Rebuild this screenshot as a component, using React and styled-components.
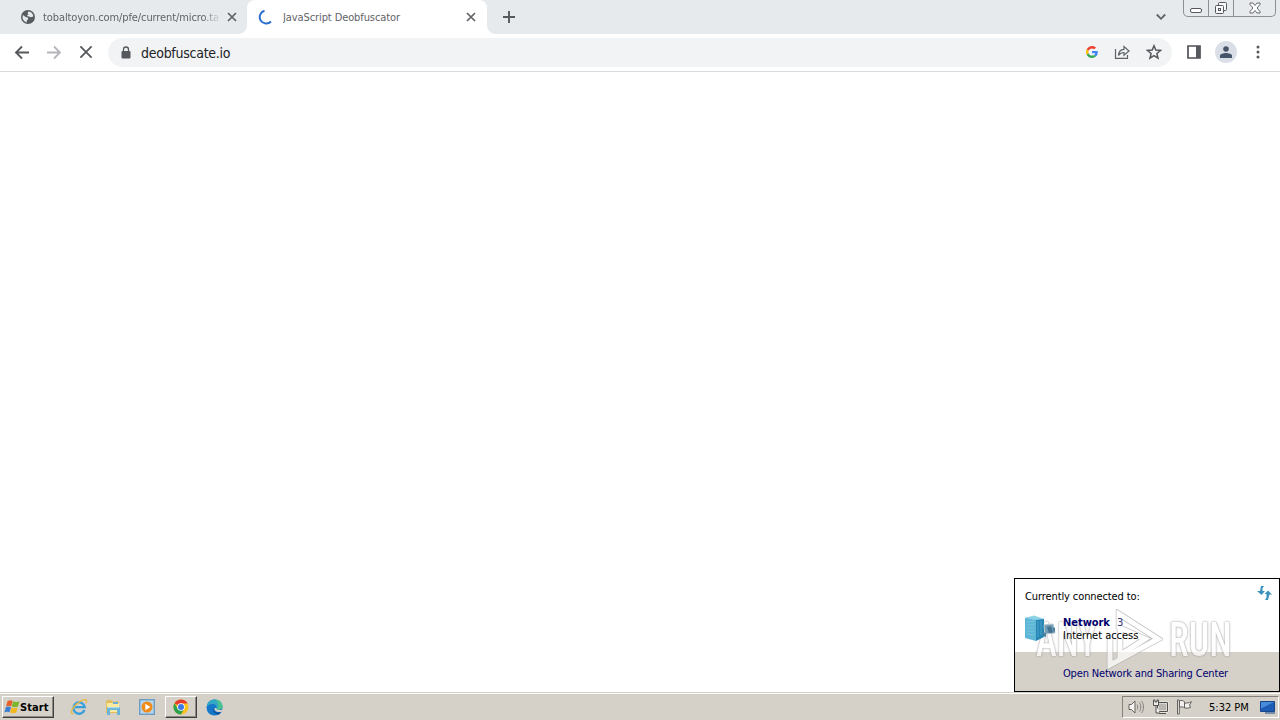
import React from 'react';
import styled, { createGlobalStyle } from 'styled-components';

const GlobalStyle = createGlobalStyle`
	* {
		box-sizing: border-box;
	}
	body {
		margin: 0;
		overflow: hidden;
		font-family: 'DejaVu Sans Condensed', 'DejaVu Sans', sans-serif;
		font-stretch: condensed;
		font-size: 11px;
	}
	svg {
		display: block;
		flex: none;
	}
`;

const Desktop = styled.div`
	width: 1280px;
	height: 720px;
	display: flex;
	flex-direction: column;
	background: #fff;
	position: relative;
`;

const TabStrip = styled.div`
	height: 34px;
	flex: none;
	display: flex;
	background: #e7eaed;
`;

const Tab = styled.div`
	width: ${(p) => (p.$active ? 240 : 247)}px;
	height: 34px;
	display: flex;
	align-items: center;
	padding: 0 ${(p) => (p.$active ? '11px 0 11px' : '10px 0 21px')};
	color: #5f6368;
	background: ${(p) => (p.$active ? '#fff' : 'transparent')};
	border-radius: 8px 8px 0 0;
	position: relative;

	&::before,
	&::after {
		content: '';
		display: ${(p) => (p.$active ? 'block' : 'none')};
		position: absolute;
		bottom: 0;
		width: 8px;
		height: 8px;
	}
	&::before {
		left: -8px;
		background: radial-gradient(circle at 0 0, transparent 7.5px, #fff 8px);
	}
	&::after {
		right: -8px;
		background: radial-gradient(circle at 100% 0, transparent 7.5px, #fff 8px);
	}
`;

const TabTitle = styled.div`
	flex: 1;
	margin-left: ${(p) => p.$gap}px;
	font-size: 11px;
	letter-spacing: ${(p) => p.$spacing}px;
	white-space: nowrap;
	overflow: hidden;
	mask-image: ${(p) => (p.$fade ? 'linear-gradient(to right, #000 160px, transparent 178px)' : 'none')};
`;

const NewTab = styled.div`
	width: 44px;
	display: flex;
	align-items: center;
	justify-content: center;
`;

const StripRight = styled.div`
	margin-left: auto;
	display: flex;
	align-items: flex-start;
`;

const TabSearch = styled.div`
	height: 34px;
	padding-right: 16px;
	display: flex;
	align-items: center;
`;

const WindowButtons = styled.div`
	height: 17px;
	margin-right: 4px;
	display: flex;
	border: 1px solid #8c8f94;
	border-top: 0;
	border-radius: 0 0 5px 5px;
`;

const WindowButton = styled.div`
	width: ${(p) => p.$width}px;
	display: flex;
	align-items: center;
	justify-content: center;

	& + & {
		border-left: 1px solid #8c8f94;
	}
`;

const Toolbar = styled.div`
	height: 38px;
	flex: none;
	display: flex;
	align-items: center;
	border-bottom: 1px solid #d9dbde;
	background: #fff;
`;

const NavButton = styled.div`
	width: 32px;
	display: flex;
	justify-content: center;
`;

const NavButtons = styled.div`
	display: flex;
	padding: 0 6px;
`;

const AddressBar = styled.div`
	width: 1064px;
	height: 29px;
	padding: 0 10px 0 12px;
	display: flex;
	align-items: center;
	background: #f1f3f4;
	border-radius: 15px;
`;

const Url = styled.div`
	flex: 1;
	margin-left: 9px;
	font-size: 14px;
	letter-spacing: -0.27px;
	color: #202124;
`;

const AddressIcons = styled.div`
	display: flex;
	align-items: center;
	gap: 16px;
	padding-bottom: 1px;
`;

const ToolbarIcons = styled.div`
	display: flex;
	align-items: center;
	padding: 0 0 1px 6px;
`;

const Avatar = styled.div`
	width: 22px;
	height: 22px;
	border-radius: 50%;
	background: #dadfe7;
	display: flex;
	align-items: center;
	justify-content: center;
`;

const Page = styled.main`
	flex: 1;
`;

const Taskbar = styled.div`
	height: 28px;
	flex: none;
	display: flex;
	align-items: center;
	padding: 2px 1px 1px 2px;
	background: #d5d0c8;
	border-top: 1px solid #d5d0c8;
	box-shadow: inset 0 1px 0 #fff;
`;

const StartButton = styled.div`
	width: 52px;
	height: 22px;
	display: flex;
	align-items: center;
	padding-left: 1px;
	font-weight: bold;
	letter-spacing: 0.1px;
	border: 1px solid;
	border-color: #fff #404040 #404040 #fff;
	box-shadow: inset -1px -1px 0 #8c8882;
`;

const QuickLaunch = styled.div`
	display: flex;
	align-items: center;
	margin-left: 8px;
`;

const LaunchItem = styled.div`
	width: ${(p) => (p.$active ? 32 : 34)}px;
	height: 22px;
	margin: 0 ${(p) => (p.$active ? 1 : 0)}px;
	display: flex;
	align-items: center;
	justify-content: center;
	border: 1px solid;
	border-color: ${(p) => (p.$active ? '#fff #404040 #404040 #fff' : 'transparent')};
	box-shadow: ${(p) => (p.$active ? 'inset -1px -1px 0 #8c8882' : 'none')};
`;

const Tray = styled.div`
	width: 157px;
	height: 22px;
	margin-left: auto;
	padding-left: 5px;
	display: flex;
	align-items: center;
	gap: 7px;
	border: 1px solid;
	border-color: #85817c #fff #fff #85817c;
`;

const Clock = styled.div`
	width: 44px;
	margin-left: 9px;
	letter-spacing: 0;
	white-space: nowrap;
`;

const Flyout = styled.div`
	position: absolute;
	right: 0;
	bottom: 28px;
	width: 266px;
	height: 114px;
	border: 1px solid #000;
	background: #fff;
	display: flex;
	flex-direction: column;
`;

const FlyoutBody = styled.div`
	position: relative;
	z-index: 1;
	height: 73px;
	padding: 7px 7px 0 10px;
	display: flex;
	flex-direction: column;
`;

const FlyoutHeader = styled.div`
	height: 21px;
	display: flex;
	align-items: center;
	justify-content: space-between;
	line-height: 13px;
	letter-spacing: -0.1px;
`;

const RefreshSlot = styled.div`
	padding-bottom: 7px;
`;

const NetworkRow = styled.div`
	display: flex;
	margin-top: 8px;
	gap: 6px;
`;

const NetworkText = styled.div`
	display: flex;
	flex-direction: column;
	padding-top: 1px;
	line-height: 13px;
	letter-spacing: -0.03px;
`;

const NetworkName = styled.div`
	height: 13px;
	color: #00006c;
	font-weight: bold;
	display: flex;
	gap: 7px;

	span {
		font-weight: normal;
		color: #3a3a80;
	}
`;

const FlyoutFooter = styled.div`
	flex: 1;
	padding: 3px 0 0 48px;
	display: flex;
	align-items: center;
	background: #d5d0c8;
	color: #00006c;
	letter-spacing: -0.17px;
	white-space: nowrap;
`;

const FooterLink = styled.span`
	position: relative;
	z-index: 1;
`;

// sits over the panel backgrounds, under the flyout texts
const Watermark = styled.div`
	position: absolute;
	right: 48px;
	bottom: 20px;
	width: 195px;
	height: 62px;
	display: flex;
	align-items: center;
	justify-content: space-between;
	opacity: 0.7;
`;

const WatermarkWord = styled.div`
	width: 62px;
	font-family: Roboto, sans-serif;
	font-size: 49px;
	font-weight: 500;
	line-height: 62px;
	white-space: nowrap;
	color: #fff;
	text-shadow: 0 0 1px #888, 0 0 2px #999, 0 0 3px #aaa;
	transform: scaleX(${(p) => p.$scale});
	transform-origin: left;
`;

const CloseIcon = ({ size, color = '#5f6368', weight = 1.7 }) => (
	<svg width={size} height={size} viewBox="0 0 10 10" stroke={color} strokeWidth={weight}>
		<path d="M1 1l8 8M9 1l-8 8" />
	</svg>
);

const ArrowIcon = ({ forward }) => (
	<svg width="16" height="16" viewBox="0 0 16 16" fill="none" stroke={forward ? '#b4b6b9' : '#55585d'} strokeWidth="1.8">
		<path d={forward ? 'M1 7.500h13M8 1.500L14 7.500 8 13.500' : 'M15 7.500H2M8 1.500L2 7.500 8 13.500'} />
	</svg>
);

const GlobeIcon = () => (
	<svg width="14" height="14" viewBox="0 0 14 14">
		<circle cx="7" cy="7" r="7" fill="#565b60" />
		<path d="M2 5l3 2.2 2 .3v1.8L5.6 11l.2 1.4C3.3 11.800 1.500 9.700 1.500 7zM7.500 1.500l-1 1.500 1 1.300-1.800 1.600L8 6.500l1.800.8 2.500-.8A5.500 5.500 0 0 0 7.500 1.500z" fill="#e7eaed" />
	</svg>
);

const GoogleIcon = () => (
	<svg width="12" height="12" viewBox="0 0 48 48">
		<path fill="#EA4335" d="M24 9.500c3.540 0 6.710 1.220 9.210 3.600l6.850-6.850C35.900 2.380 30.470 0 24 0 14.620 0 6.510 5.380 2.560 13.220l7.980 6.190C12.430 13.720 17.740 9.500 24 9.500z" />
		<path fill="#4285F4" d="M46.980 24.550c0-1.570-.15-3.090-.38-4.550H24v9.020h12.940c-.58 2.960-2.260 5.480-4.780 7.180l7.730 6c4.510-4.180 7.090-10.360 7.090-17.650z" />
		<path fill="#FBBC05" d="M10.530 28.590c-.48-1.450-.76-2.990-.76-4.590s.27-3.140.76-4.590l-7.980-6.190C.92 16.460 0 20.120 0 24c0 3.880.92 7.540 2.560 10.780l7.970-6.190z" />
		<path fill="#34A853" d="M24 48c6.480 0 11.930-2.130 15.890-5.810l-7.730-6c-2.150 1.450-4.920 2.300-8.160 2.300-6.260 0-11.570-4.220-13.470-9.910l-7.980 6.190C6.510 42.620 14.620 48 24 48z" />
	</svg>
);

const WindowsLogo = () => (
	<svg width="16" height="16" viewBox="0 0 16 16">
		<path d="M3.500 2.200c2-1.200 3.500-1.200 5.200-.2L7.200 7.400c-1.600-1-3.500-1-5.200.1z" fill="#e8602c" />
		<path d="M9.200 2.300c1.800 1 3.900 1 6.300 0L14 7.500c-2.200 1-4.200 1-6.300 0z" fill="#7db72f" />
		<path d="M1.800 8.200c1.800-1 3.500-.9 5.200 0L5.500 13.300c-1.600-.9-3.300-.9-5.100.1z" fill="#3b7fd0" />
		<path d="M7.500 8.400c1.900 1 4 1 6.200 0l-1.400 5.200c-2 1-4.200 1-6.200 0z" fill="#f4b81c" />
	</svg>
);

const IeIcon = () => (
	<svg width="18" height="18" viewBox="0 0 18 18" fill="none">
		<path d="M14.500 12A5.700 5.700 0 1 1 14.800 9.200H5" stroke="#38a0dc" strokeWidth="2.300" />
		<path d="M3.500 15.500C.2 16 1 12.500 3.800 9 8 3.700 15 .2 16.300 2.200c.5.800.2 1.900-.5 3" stroke="#e5b947" strokeWidth="1.400" />
	</svg>
);

const FolderIcon = () => (
	<svg width="16" height="17" viewBox="0 0 16 17">
		<path d="M1 2.500L2 1h4l1 1.500h7V14H1z" fill="#e2bd58" />
		<path d="M2 4h12v9H2z" fill="#fae9a0" />
		<path d="M8 3h5v2H8z" fill="#6daed2" />
		<path d="M2 9.500c0-1 .5-1.500 1.500-1.500h10c1 0 1.500.5 1.500 1.500V16h-3v-5H5v5H2z" fill="#69b5da" />
		<path d="M3 8.700h11" stroke="#b9e2f3" />
	</svg>
);

const PlayerIcon = () => (
	<svg width="16" height="16" viewBox="0 0 16 16">
		<rect x=".7" y=".7" width="14.600" height="14.600" fill="#b6d5ec" stroke="#6c9dc5" strokeWidth="1.400" />
		<circle cx="8" cy="8" r="5.500" fill="#f18b18" />
		<path d="M6.300 4.700L11.400 8l-5.100 3.300z" fill="#fff" />
	</svg>
);

const ChromeLogo = () => (
	<svg width="16" height="16" viewBox="0 0 16 16">
		<circle cx="8" cy="8" r="7.500" fill="#fcc31e" />
		<path d="M8 8L1.500 4.250a7.500 7.500 0 0 1 13 0L14.600 4.500H8z" fill="#e33b2e" />
		<path d="M1.500 4.250A7.500 7.500 0 0 0 8 15.500L11.200 9.800 8 8 4.800 9.800z" fill="#2da14c" />
		<circle cx="8" cy="8" r="3.800" fill="#fff" />
		<circle cx="8" cy="8" r="3" fill="#3b78e7" />
	</svg>
);

const EdgeLogo = () => (
	<svg width="18" height="17" viewBox="0 0 18 17">
		<circle cx="8.500" cy="8.500" r="8" fill="#1578c8" />
		<path d="M.7 7.500C1.500 3 4.700.5 8.700.5c4.500 0 7.800 3.200 7.800 6.700 0 2.200-1.800 3.600-4 3.600-1.800 0-2.500-.8-2-1.800C11 7.500 9.500 5 6.500 5 3.500 5 1.500 6.500.7 7.500z" fill="#32a9c5" />
		<path d="M8.700.5c4.500 0 7.800 3.200 7.800 6.700 0 2.200-1.800 3.600-4 3.600-.8 0-1.700-.2-2-.8C14 8 13 3 8.700.5z" fill="#4cc48b" />
		<path d="M7.200 8c-.8 3 1.500 5.500 4.700 5.500 1.700 0 2.800-.5 3.600-1-.5 1.200-1.600 2.400-3 3.200C8 15 5.500 11 7.200 8z" fill="#0b4f9c" />
		<path d="M10.400 9c-.7 1.400 1.400 2.600 6.600 1.400l-.5 2.100c-4.800 1.700-8.500-.5-7.900-3.500z" fill="#d5d0c8" />
	</svg>
);

const VolumeIcon = () => (
	<svg width="17" height="16" viewBox="0 0 17 16" fill="none" stroke="#66635f">
		<path d="M1 5.500h2.500L7 2v12L3.500 10.500H1z" fill="#f5f4f2" />
		<path d="M9 5.500c1 1.500 1 3.500 0 5M11.300 3.500c2 2.500 2 6.500 0 9M13.500 2c2.700 3.500 2.700 8.500 0 12" stroke="#84817c" />
	</svg>
);

const TrayNetworkIcon = () => (
	<svg width="17" height="16" viewBox="0 0 17 16" fill="none" stroke="#55524e">
		<path d="M5.500 3.500h10v9h-10z" fill="#bab6af" stroke="#f8f8f8" strokeWidth="2" />
		<path d="M5.500 3.500h10v9h-10zM7 14.500h7" />
		<path d="M1.500 1v5.500h5V1h-1.500v2h-2V1zM4 6.500V14h4" fill="#eee" />
	</svg>
);

const FlagIcon = () => (
	<svg width="17" height="16" viewBox="0 0 17 16" fill="#f2f1ef" stroke="#66635f">
		<path d="M1.500 1h1.800v14H1.500zM3.500 2c2-1 3.500-.5 5 .8v6c-1.600-1.100-3-1.200-5-.5zM8.500 4c2.500.3 4 0 7-1.300L13.500 6l1 2.500c-2 .7-4 .8-6 .3z" />
	</svg>
);

const DesktopIcon = () => (
	<svg width="16" height="15" viewBox="0 0 16 15">
		<path d="M.5 1.500h14v10H.5z" fill="#1d5cb5" stroke="#184489" />
		<path d="M1 2h13L1 8.500z" fill="#468bd9" />
		<path d="M5 13h10" stroke="#55779e" strokeWidth="1.500" />
	</svg>
);

const ServerIcon = () => (
	<svg width="32" height="27" viewBox="0 0 32 27">
		<path d="M0 3L11 1v25L0 23z" fill="#5fb7d8" />
		<path d="M11 3l8 1v18l-8 4z" fill="#2687b5" />
		<path d="M0 3L9 .5l10 3.500-8 1z" fill="#8ed2e8" />
		<path d="M2 7l7-.8M2 10l7-.3M2 13h7M2 16l7 .5M2 19l7 1" stroke="#7cc6df" strokeWidth=".8" />
		<path d="M13 6v16M16 6v14" stroke="#54aacd" strokeWidth=".8" />
		<path d="M19 10l9-1 2 9-10 1z" fill="#6f9bb6" stroke="#b5c5ce" />
		<path d="M22 12l4-.5 2 6-4 .5z" fill="#45718f" />
		<path d="M18 17l3 1v4l-3-1zM28 12l2 1v4l-2-1z" fill="#4b829e" />
	</svg>
);

const RefreshIcon = () => (
	<svg width="15" height="14" viewBox="0 0 15 14" fill="#3d91bd">
		<path d="M4 0h3L5.500 2.500V5H8L4.500 9 0 5h3z" />
		<path d="M11 14H8l1.500-2.500V8H7.500L11 4.500 15 8.500h-2.500z" />
	</svg>
);

const App = () => (
	<Desktop>
		<GlobalStyle />
		<TabStrip>
			<Tab>
				<GlobeIcon />
				<TabTitle $gap={8} $spacing={-0.1} $fade>
					tobaltoyon.com/pfe/current/micro.ta
				</TabTitle>
				<CloseIcon size={10} />
			</Tab>
			<Tab $active>
				<svg width="15" height="16" viewBox="0 0 15 16" fill="none" stroke="#2c71cf" strokeWidth="2">
					<path d="M6.500 1.800A6.500 6.500 0 1 0 13 12.500" />
				</svg>
				<TabTitle $gap={10} $spacing={-0.1}>
					JavaScript Deobfuscator
				</TabTitle>
				<CloseIcon size={10} />
			</Tab>
			<NewTab>
				<svg width="12" height="12" viewBox="0 0 12 12" stroke="#55585d" strokeWidth="1.900">
					<path d="M6 0v12M0 6h12" />
				</svg>
			</NewTab>
			<StripRight>
				<TabSearch>
					<svg width="12" height="8" viewBox="0 0 12 8" fill="none" stroke="#5f6368" strokeWidth="1.800">
						<path d="M1.800 1.500L6 5.800l4.200-4.300" />
					</svg>
				</TabSearch>
				<WindowButtons>
					<WindowButton $width={24}>
						<svg width="13" height="14" viewBox="0 0 13 14" fill="#fff" stroke="#56585e">
							<rect x=".5" y="7.500" width="11" height="4" rx="1.500" />
						</svg>
					</WindowButton>
					<WindowButton $width={25}>
						<svg width="14" height="14" viewBox="0 0 14 14" fill="#f7f8f9" stroke="#56585e">
							<rect x="4.500" y="1.500" width="8" height="8" rx="1" />
							<rect x="1.500" y="4.500" width="8" height="8" rx="1" />
							<rect x="4.500" y="7.500" width="2" height="2" />
						</svg>
					</WindowButton>
					<WindowButton $width={42}>
						<svg width="12" height="12" viewBox="0 0 12 12" fill="#fff" stroke="#56585e" strokeWidth=".9">
							<path d="M1 1h3l2 2.500L8 1h3v1.500L8 6l3 3.500V11H8L6 8.500 4 11H1V9.500L4 6 1 2.500z" />
						</svg>
					</WindowButton>
				</WindowButtons>
			</StripRight>
		</TabStrip>
		<Toolbar>
			<NavButtons>
				<NavButton><ArrowIcon /></NavButton>
				<NavButton><ArrowIcon forward /></NavButton>
				<NavButton><CloseIcon size={14} color="#55585d" weight={1.3} /></NavButton>
			</NavButtons>
			<AddressBar>
				<svg width="12" height="14" viewBox="0 0 12 14" fill="#55585d">
					<rect x="1.500" y="5" width="9" height="7.500" rx="1" />
					<path d="M3.500 5V3.500a2.500 2.500 0 0 1 5 0V5" fill="none" stroke="#55585d" strokeWidth="1.300" />
				</svg>
				<Url>deobfuscate.io</Url>
				<AddressIcons>
					<GoogleIcon />
					<svg width="16" height="16" viewBox="0 0 16 16" fill="none" stroke="#5f6368" strokeWidth="1.200">
						<path d="M1.500 5v9.300h12V11" />
						<path d="M4.500 11.500C4.700 7.500 6.800 5.500 10 5.300V2.500L15 7l-5 4.200V8.500c-2.500 0-4.200.8-5.500 3z" />
					</svg>
					<svg width="16" height="16" viewBox="0 0 16 16" fill="none" stroke="#55585d" strokeWidth="1.500">
						<path d="M8 1.800l1.800 4.300 4.700.4-3.600 3 1.100 4.600L8 11.600l-4 2.500 1.100-4.600-3.600-3 4.700-.4z" />
					</svg>
				</AddressIcons>
			</AddressBar>
			<ToolbarIcons>
				<NavButton>
					<svg width="14" height="14" viewBox="0 0 14 14">
						<path d="M1 1h12v12H1z" fill="none" stroke="#4f5257" strokeWidth="1.700" />
						<path d="M9 1h4v12H9z" fill="#55585d" />
					</svg>
				</NavButton>
				<NavButton>
					<Avatar>
						<svg width="12" height="12" viewBox="0 0 12 12" fill="#475569">
							<circle cx="6" cy="3" r="2.800" />
							<path d="M0 12V9.500C0 8 3.500 7 6 7s6 1 6 2.500V12z" />
						</svg>
					</Avatar>
				</NavButton>
				<NavButton>
					<svg width="4" height="14" viewBox="0 0 4 14" fill="#55585d">
						<circle cx="2" cy="2" r="1.500" />
						<circle cx="2" cy="7" r="1.500" />
						<circle cx="2" cy="12" r="1.500" />
					</svg>
				</NavButton>
			</ToolbarIcons>
		</Toolbar>
		<Page />
		<Taskbar>
			<StartButton>
				<WindowsLogo />
				Start
			</StartButton>
			<QuickLaunch>
				<LaunchItem><IeIcon /></LaunchItem>
				<LaunchItem><FolderIcon /></LaunchItem>
				<LaunchItem><PlayerIcon /></LaunchItem>
				<LaunchItem $active><ChromeLogo /></LaunchItem>
				<LaunchItem><EdgeLogo /></LaunchItem>
			</QuickLaunch>
			<Tray>
				<VolumeIcon />
				<TrayNetworkIcon />
				<FlagIcon />
				<Clock>5:32 PM</Clock>
				<DesktopIcon />
			</Tray>
		</Taskbar>
		<Flyout>
			<Watermark>
				<WatermarkWord $scale={0.72}>ANY</WatermarkWord>
				<svg width="58" height="62" viewBox="0 0 58 62" fill="none">
					<path d="M14 20V5l39 25L5 56V24M15 19v27l25-16z" stroke="#aaa" strokeWidth="6.500" />
					<path d="M14 20V5l39 25L5 56V24M15 19v27l25-16z" stroke="#fff" strokeWidth="5" />
				</svg>
				<WatermarkWord $scale={0.74}>RUN</WatermarkWord>
			</Watermark>
			<FlyoutBody>
				<FlyoutHeader>
					Currently connected to:
					<RefreshSlot><RefreshIcon /></RefreshSlot>
				</FlyoutHeader>
				<NetworkRow>
					<ServerIcon />
					<NetworkText>
						<NetworkName>Network <span>3</span></NetworkName>
						<div>Internet access</div>
					</NetworkText>
				</NetworkRow>
			</FlyoutBody>
			<FlyoutFooter>
				<FooterLink>Open Network and Sharing Center</FooterLink>
			</FlyoutFooter>
		</Flyout>
	</Desktop>
);

export default App;
